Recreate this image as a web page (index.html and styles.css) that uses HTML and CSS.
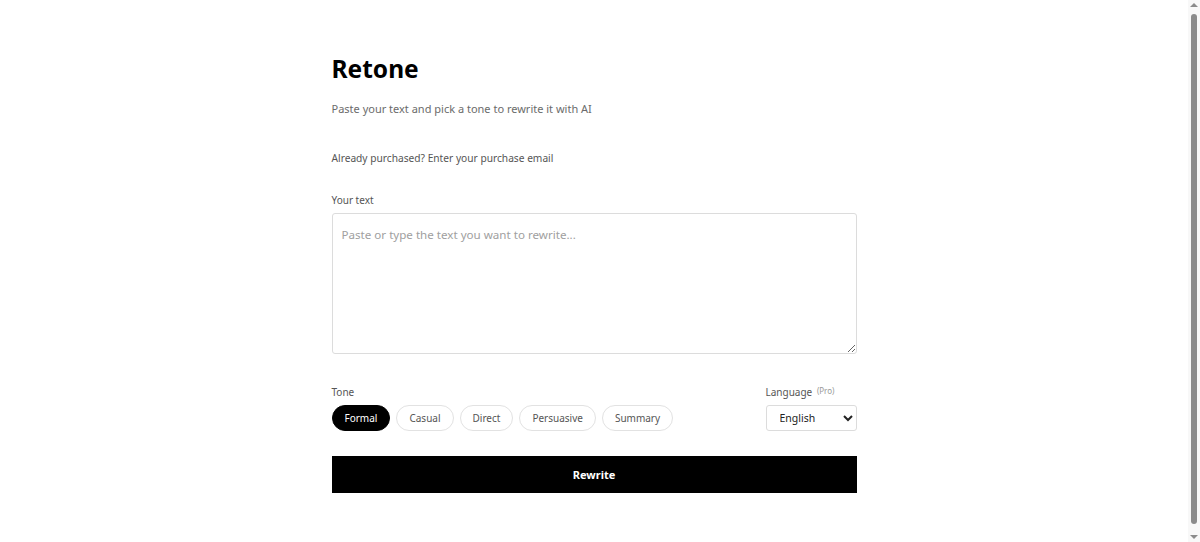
FILE: index.html
```html
<!DOCTYPE html>
<html lang="en">
<head>
<meta charset="utf-8">
<title>Retone</title>
<link rel="stylesheet" href="styles.css">
</head>
<body>
<div class="page">
<main class="app">
  <h1 class="title">Retone</h1>
  <p class="subtitle">Paste your text and pick a tone to rewrite it with AI</p>
  <p class="purchased">Already purchased? Enter your purchase email</p>

  <label class="field-label" for="src">Your text</label>
  <textarea id="src" class="text-input" placeholder="Paste or type the text you want to rewrite..."></textarea>

  <div class="options">
    <div class="tone">
      <div class="field-label">Tone</div>
      <div class="chips">
        <button class="chip active">Formal</button>
        <button class="chip">Casual</button>
        <button class="chip">Direct</button>
        <button class="chip">Persuasive</button>
        <button class="chip">Summary</button>
      </div>
    </div>
    <div class="lang">
      <div class="field-label">Language <span class="pro">(Pro)</span></div>
      <select class="lang-select">
        <option>English</option>
      </select>
    </div>
  </div>

  <button class="rewrite">Rewrite</button>
</main>
</div>
<div class="scrollbar" aria-hidden="true">
  <div class="sb-arrow up"></div>
  <div class="sb-thumb"></div>
  <div class="sb-arrow down"></div>
</div>
</body>
</html>
```

FILE: styles.css
```css
html, body {
  margin: 0;
  padding: 0;
  background: #ffffff;
}
body {
  font-family: "Noto Sans", "Open Sans", Arial, sans-serif;
  color: #111;
}
.page {
  width: 1188px;
}
.app {
  width: 525px;
  margin: 0 auto;
  padding: 52px 0 70px;
  display: flex;
  flex-direction: column;
}
.title {
  margin: 0;
  font-size: 24.5px;
  font-weight: 700;
  line-height: 34px;
  color: #000;
}
.subtitle {
  margin: 14px 0 0;
  font-size: 11px;
  line-height: 18px;
  color: #6b6b6b;
}
.purchased {
  margin: 32px 0 0;
  font-size: 10.2px;
  line-height: 16px;
  color: #555;
}
.field-label {
  font-size: 10px;
  line-height: 16px;
  color: #555;
}
.app > .field-label {
  margin-top: 26px;
  margin-bottom: 5px;
}
.text-input {
  box-sizing: border-box;
  width: 100%;
  height: 141px;
  margin: 0;
  padding: 12px 9px;
  border: 1px solid #dcdcdc;
  border-radius: 3px;
  font-family: inherit;
  font-size: 11.6px;
  line-height: 18px;
  color: #222;
  resize: vertical;
  outline: none;
}
.text-input::placeholder {
  color: #a0a0a0;
}
.options {
  display: flex;
  justify-content: space-between;
  align-items: flex-end;
  margin-top: 29px;
}
.tone .field-label,
.lang .field-label {
  margin-bottom: 5px;
}
.chips {
  display: flex;
  gap: 6px;
}
.chip {
  height: 26px;
  padding: 0 12px;
  border: 1px solid #e2e2e2;
  border-radius: 13px;
  background: #fff;
  color: #555;
  font-family: inherit;
  font-size: 10px;
  cursor: pointer;
}
.chip.active {
  background: #000;
  border-color: #000;
  color: #fff;
}
.pro {
  font-size: 8px;
  color: #999;
  margin-left: 2px;
  vertical-align: 2px;
}
.lang-select {
  box-sizing: border-box;
  width: 91px;
  height: 26px;
  padding: 0 5px 0 9px;
  border: 1px solid #dcdcdc;
  border-radius: 3px;
  background: #fff;
  font-family: inherit;
  font-size: 10.5px;
  color: #222;
}
.rewrite {
  margin-top: 25px;
  height: 37px;
  width: 100%;
  border: none;
  background: #000;
  color: #fff;
  font-family: inherit;
  font-size: 11px;
  font-weight: 700;
  cursor: pointer;
}
.scrollbar {
  position: fixed;
  top: 0;
  right: 0;
  width: 12px;
  height: 100vh;
  background: #f8f8f8;
  display: flex;
  flex-direction: column;
  align-items: center;
}
.sb-arrow {
  width: 0;
  height: 0;
  border-left: 4px solid transparent;
  border-right: 4px solid transparent;
}
.sb-arrow.up {
  margin-top: 3px;
  border-bottom: 4px solid #8b8b8b;
}
.sb-arrow.down {
  margin-bottom: 3px;
  border-top: 4px solid #8b8b8b;
}
.sb-thumb {
  flex: 1;
  width: 6px;
  margin: 7px 0 11px;
  border-radius: 3px;
  background: #8b8b8b;
}
```
